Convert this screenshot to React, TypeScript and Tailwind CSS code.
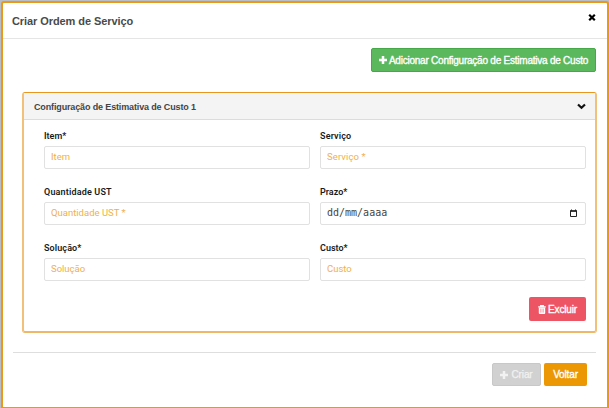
import React from "react";

const labelFont = "font-['Roboto','Liberation_Sans',sans-serif]";

function PlusIcon() {
  return (
    <svg width="8" height="8" viewBox="0 0 8 8" className="shrink-0">
      <path d="M4 0v8M0 4h8" stroke="currentColor" strokeWidth="2.5" />
    </svg>
  );
}

function TrashIcon() {
  return (
    <svg width="8" height="9" viewBox="0 0 8 9" className="shrink-0">
      <path d="M0.2 1.9h7.6M2.6 1.6V.6h2.8v1" fill="none" stroke="currentColor" strokeWidth="1.1" />
      <path d="M0.8 2.4h6.4v5.6a.9.9 0 0 1-.9.9H1.7a.9.9 0 0 1-.9-.9z" fill="currentColor" />
      <path d="M2.6 3.6v4M4 3.6v4M5.4 3.6v4" stroke="#ed5565" strokeWidth=".45" />
    </svg>
  );
}

type FieldProps = {
  label: string;
  labelClass?: string;
  placeholder?: string;
  placeholderClass?: string;
};

function Field({ label, labelClass = "", placeholder, placeholderClass = "" }: FieldProps) {
  return (
    <div className="flex w-[266px] flex-col">
      <label className={`${labelFont} h-[16px] whitespace-nowrap text-[9px] leading-[13px] font-semibold text-[#1b1b1b] ${labelClass}`}>
        {label}
      </label>
      {placeholder ? (
        <input
          type="text"
          placeholder={placeholder}
          className={`h-[23px] rounded-[2px] border border-[#e1e1e1] bg-white px-[6px] pb-[3px] font-['Roboto',sans-serif] text-[9.5px] leading-[14px] outline-none placeholder:text-[#f1b04a] placeholder:opacity-100 ${placeholderClass}`}
        />
      ) : (
        <div className="flex h-[23px] items-center justify-between rounded-[2px] border border-[#e1e1e1] pr-[7px] pl-[6px]">
          <span className="pb-[2px] font-['DejaVu_Sans_Mono',monospace] text-[10px] leading-[14px] text-[#444]">dd/mm/aaaa</span>
          <svg width="9" height="9" viewBox="0 0 9 9">
            <path d="M1.5 2h6v5.5h-6z" fill="none" stroke="#222" />
            <path d="M1 1.2h7v1.6H1zM2 .4h1v1H2zM6 .4h1v1H6z" fill="#222" />
          </svg>
        </div>
      )}
    </div>
  );
}

export default function App() {
  return (
    <div className="h-[408px] w-[609px] overflow-hidden bg-[#b9bdc5] pt-px pl-px font-['Liberation_Sans',Arial,sans-serif]">
      <div className="h-[407px] w-[608px] rounded-t-[3px] border-2 border-b border-[#e8991a] bg-white">
        <header className="flex h-[36px] items-center justify-between border-b border-[#e5e5e5] pr-[11px] pl-[9px]">
          <h1 className="text-[11px] leading-[14px] font-bold tracking-[-0.08px] text-[#4a4a4a]">Criar Ordem de Serviço</h1>
          <button aria-label="Fechar" className="pb-[6px]">
            <svg width="8" height="7" viewBox="0 0 8 7">
              <path d="M1.2 .8l5.6 5.4M6.8 .8l-5.6 5.4" stroke="#000" strokeWidth="2.2" />
            </svg>
          </button>
        </header>

        <div className="flex justify-end pt-[9px] pr-[11px]">
          <button className="flex h-[24px] w-[225px] items-center justify-center gap-[2px] rounded-[2px] border border-[#45a849] bg-[#5cb85c] text-[10px] tracking-[-0.23px] whitespace-nowrap text-white">
            <PlusIcon />
            <span className="[-webkit-text-stroke:0.35px_white]">Adicionar Configuração de Estimativa de Custo</span>
          </button>
        </div>

        <section className="mt-[20px] ml-[19px] h-[241px] w-[575px] rounded-[3px] border-x-2 border-t border-b-2 border-x-[#f2c078] border-t-[#e8961e] border-b-[#efb868]">
          <div className="flex h-[27px] items-center justify-between border-b border-[#dcdcdc] bg-[#f4f4f4] pr-[9px] pl-[10px]">
            <h2 className="pt-px text-[9px] leading-[12px] font-bold tracking-[-0.14px] whitespace-nowrap text-[#444]">Configuração de Estimativa de Custo 1</h2>
            <svg width="9" height="7" viewBox="0 0 9 7" className="mt-px">
              <path d="M1 1.5l3.5 3.3L8 1.5" fill="none" stroke="#111" strokeWidth="2.2" />
            </svg>
          </div>
          <div className="grid grid-cols-[266px_266px] gap-x-[10px] gap-y-[17px] pt-[10px] pl-[20px]">
            <Field label="Item*" placeholder="Item" />
            <Field label="Serviço" labelClass="tracking-[0.15px]" placeholder="Serviço *" placeholderClass="tracking-[0.1px]" />
            <Field label="Quantidade UST" labelClass="tracking-[0.17px]" placeholder="Quantidade UST *" />
            <Field label="Prazo*" />
            <Field label="Solução*" labelClass="tracking-[0.1px]" placeholder="Solução" />
            <Field label="Custo*" placeholder="Custo" />
          </div>
          <div className="flex justify-end pt-[16px] pr-[9px]">
            <button className="flex h-[24px] w-[57px] items-center justify-center gap-[2px] rounded-[2px] bg-[#ed5565] text-[10px] tracking-[-0.15px] text-white">
              <TrashIcon />
              <span className="[-webkit-text-stroke:0.35px_white]">Excluir</span>
            </button>
          </div>
        </section>

        <footer className="mt-[19px] mr-[11px] ml-[10px] flex justify-end gap-[3px] border-t border-[#dedede] pt-[10px] pr-[9px]">
          <button className="flex h-[23px] w-[49px] items-center justify-center gap-[3px] rounded-[2px] border border-[#c8c8c8] bg-[#d1d1d1] text-[10px] tracking-[-0.1px] text-[#f2f2f2]">
            <PlusIcon />
            <span className="[-webkit-text-stroke:0.25px_#f2f2f2]">Criar</span>
          </button>
          <button className="h-[23px] w-[43px] rounded-[2px] bg-[#ec9704] text-[10px] tracking-[-0.15px] text-white [-webkit-text-stroke:0.35px_white]">Voltar</button>
        </footer>
      </div>
    </div>
  );
}
